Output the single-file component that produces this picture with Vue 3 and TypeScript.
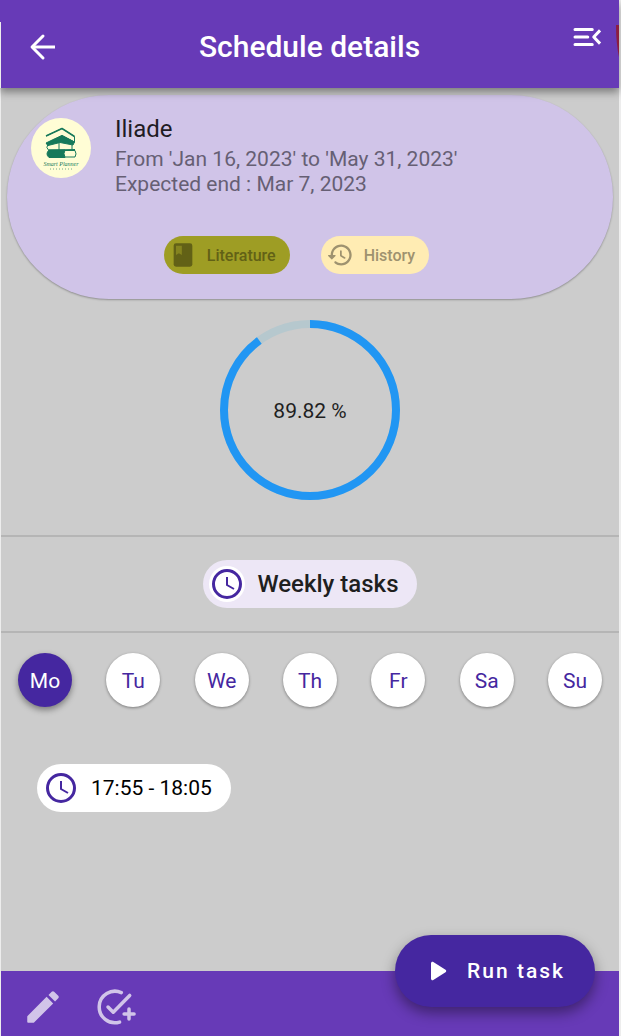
<script setup lang="ts">
import { computed, ref } from 'vue'

const days: string[] = ['Mo', 'Tu', 'We', 'Th', 'Fr', 'Sa', 'Su']
const activeDay = ref('Mo')
const progress = 89.82
const radius = 86
const circumference = 2 * Math.PI * radius
const dash = computed(() => `${(circumference * progress) / 100} ${circumference}`)
</script>

<template>
  <div class="page">
    <header class="app-bar">
      <button class="icon-btn back" type="button" aria-label="Back">
        <svg width="36" height="36" viewBox="0 0 24 24" fill="none" stroke="#fff" stroke-width="2">
          <path d="M20 12H5.500" />
          <path d="M12 4.700L4.700 12l7.300 7.300" stroke-linejoin="round" stroke-linecap="round" />
        </svg>
      </button>
      <h1>Schedule details</h1>
      <button class="icon-btn menu" type="button" aria-label="Open menu">
        <svg width="36" height="36" viewBox="0 0 24 24" fill="none" stroke="#fff" stroke-width="2" stroke-linecap="round">
          <path d="M4 7h11.500M4 12h8.500M4 17h11.500" />
          <path d="M20.700 7.600L16.500 12l4.200 4.400" stroke-linejoin="round" stroke-linecap="butt" />
        </svg>
      </button>
      <svg class="ribbon" width="3" height="32" viewBox="0 0 3 32" aria-hidden="true">
        <path d="M0 0H3V32Q0 18 0 0Z" fill="#8c1d3f" />
      </svg>
    </header>

    <main class="content">
      <section class="card">
        <div class="summary">
          <svg class="avatar" width="60" height="60" viewBox="0 0 60 60" role="img" aria-label="Smart Planner">
            <circle cx="30" cy="30" r="30" fill="#fffdd5" />
            <g stroke="#16795a" fill="none" stroke-width="1" stroke-linejoin="round">
              <path d="M15 18L31 10.500L43.500 18.500V24L31 17.500L15 26" />
              <path d="M15 18L31 10.500L43.500 18.500" stroke-width="1.500" />
              <path d="M15 25Q23 21 31 17.500L43.500 24L42 27L29 24.500L17 27.500Z" fill="#16795a" />
              <path d="M17 26Q14.500 30 17.500 32L44 31.500M28 24.500V32M41 27V31" />
              <path d="M18 32H34Q32 35.500 34 39.500H18Q14 36 18 32Z" fill="#16795a" />
              <path d="M33 32.500H44Q46 36 44 39H33" />
            </g>
            <text x="30" y="48" text-anchor="middle" class="logo-name">Smart Planner</text>
            <path d="M19 51H42" stroke="#16795a" stroke-width="1" stroke-dasharray="1 2" opacity=".6" />
          </svg>
          <div class="details">
            <h2>Iliade</h2>
            <p>From 'Jan 16, 2023' to 'May 31, 2023'</p>
            <p>Expected end : Mar 7, 2023</p>
          </div>
        </div>
        <div class="chips">
          <span class="chip literature">
            <svg width="28" height="28" viewBox="0 0 24 24" fill="currentColor" fill-rule="evenodd">
              <path d="M6 2H18a2 2 0 0 1 2 2V20a2 2 0 0 1-2 2H6a2 2 0 0 1-2-2V4a2 2 0 0 1 2-2Z" />
              <path d="M6 4V12L8.500 10.500L11 12V4Z" fill="#85841f" />
            </svg>
            Literature
          </span>
          <span class="chip history">
            <svg width="28" height="28" viewBox="0 0 24 24" fill="currentColor">
              <path d="M13.260 3C8.170 2.860 4 6.950 4 12H2.210c-.45 0-.67.54-.35.85l2.790 2.800c.2.2.51.2.71 0l2.790-2.800c.31-.31.09-.85-.36-.85H6c0-3.900 3.180-7.050 7.100-7 3.720.05 6.850 3.180 6.900 6.900.05 3.910-3.100 7.100-7 7.100-1.610 0-3.100-.55-4.280-1.480-.4-.31-.96-.28-1.320.08-.42.42-.39 1.130.08 1.490C9 20.290 10.910 21 13 21c5.050 0 9.140-4.170 9-9.260-.13-4.690-4.050-8.610-8.740-8.740zm-.51 5c-.41 0-.75.34-.75.75v3.680c0 .35.19.68.49.86l3.120 1.850c.36.21.82.09 1.030-.26.21-.36.09-.82-.26-1.030l-2.880-1.710v-3.400c0-.4-.34-.74-.75-.74z" />
            </svg>
            History
          </span>
        </div>
      </section>

      <section class="progress" role="progressbar" aria-label="Progress" :aria-valuenow="progress">
        <svg width="180" height="180" viewBox="0 0 180 180" fill="none" stroke-width="8">
          <circle cx="90" cy="90" :r="radius" stroke="#b6c8ce" />
          <circle cx="90" cy="90" :r="radius" stroke="#2196f3" :stroke-dasharray="dash" transform="rotate(-90 90 90)" />
        </svg>
        <span>{{ progress }} %</span>
      </section>

      <section class="weekly">
        <h2 class="weekly-pill">
          <svg class="clock-disc" width="36" height="36" viewBox="0 0 36 36" fill="none" stroke="#4527a0">
            <circle cx="18" cy="18" r="13.500" stroke-width="3" />
            <path d="M18 11V19L25 23" stroke-width="2" />
          </svg>
          Weekly tasks
        </h2>
      </section>

      <nav class="days" aria-label="Days">
        <button
          v-for="day in days"
          :key="day"
          type="button"
          class="day"
          :class="{ active: day === activeDay }"
          @click="activeDay = day"
        >{{ day }}</button>
      </nav>

      <div class="slots">
        <button class="slot" type="button">
          <svg width="36" height="36" viewBox="0 0 36 36" fill="none" stroke="#4527a0">
            <circle cx="18" cy="18" r="13.500" stroke-width="3" />
            <path d="M18 11V19L25 23" stroke-width="2" />
          </svg>
          17:55 - 18:05
        </button>
      </div>
    </main>

    <footer class="bottom-bar">
      <button class="icon-btn" type="button" aria-label="Edit">
        <svg width="42" height="42" viewBox="0 0 24 24" fill="#d1c4e9">
          <path d="M3 17.460v3.040c0 .28.22.5.5.5h3.040c.13 0 .26-.05.35-.15L17.810 9.940l-3.750-3.750L3.150 17.100c-.1.1-.15.22-.15.36zM20.710 7.040c.39-.39.39-1.020 0-1.410l-2.340-2.340c-.39-.39-1.020-.39-1.410 0l-1.830 1.830 3.750 3.750 1.830-1.830z" />
        </svg>
      </button>
      <button class="icon-btn" type="button" aria-label="Add task">
        <svg width="42" height="42" viewBox="0 0 24 24" fill="none" stroke="#d1c4e9" stroke-width="2" stroke-linecap="round" stroke-linejoin="round">
          <path d="M15.600 3.750A9 9 0 1 0 14.600 20.600" />
          <path d="M8 12L11 15L20.400 5.400" />
          <path d="M20 13.200V18.800M17.200 16H22.900" />
        </svg>
      </button>
      <button class="run" type="button">
        <svg width="36" height="36" viewBox="0 0 24 24" fill="#fff">
          <path d="M8 6.820v10.360c0 .79.87 1.270 1.540.84l8.140-5.180c.62-.39.62-1.290 0-1.690L9.540 5.980C8.870 5.550 8 6.030 8 6.820z" />
        </svg>
        Run task
      </button>
    </footer>
  </div>
</template>

<style>
body {
  margin: 0;
  background: #ededed;
}
</style>

<style scoped>
.page {
  display: flex;
  flex-direction: column;
  min-height: 100vh;
  margin-right: 2px;
  font-family: Roboto, 'Liberation Sans', sans-serif;
  font-size: 21px;
  color: #1f1f1f;
}
h1,
h2,
p {
  margin: 0;
}
svg {
  display: block;
  flex: none;
}
button {
  border: 0;
  font: inherit;
  cursor: pointer;
}
.icon-btn {
  padding: 0;
  background: none;
}
.app-bar {
  position: relative;
  z-index: 1;
  display: grid;
  grid-template-columns: 1fr auto 1fr;
  align-items: center;
  box-sizing: border-box;
  height: 88px;
  padding: 5px 14px 0;
  background: linear-gradient(#ededed, #ededed) 0 22px / 1px 100% no-repeat, #673ab7;
  box-shadow: 0 4px 8px rgba(0, 0, 0, 0.4);
  color: #fff;
}
.app-bar h1 {
  font-size: 30px;
  line-height: 36px;
  font-weight: 500;
}
.back {
  justify-self: start;
  margin-left: 11px;
}
.menu {
  justify-self: end;
  align-self: start;
  margin-top: 14px;
}
.ribbon {
  position: absolute;
  top: 25px;
  right: 0;
}
.content {
  flex: 1;
  margin-left: 1px;
  background: #ccc;
}
.card {
  box-sizing: border-box;
  height: 204px;
  margin: 7px 6px 0;
  padding: 20px 24px 0;
  border-radius: 102px;
  background: #d0c4e8;
  box-shadow: 0 1px 2px rgba(0, 0, 0, 0.3);
}
.summary {
  display: flex;
  gap: 24px;
  padding-top: 3px;
}
.logo-name {
  font: italic 6px 'Liberation Serif', serif;
  fill: #16795a;
}
.details {
  height: 121px;
  margin-top: -3px;
  color: #665f74;
  line-height: 25px;
}
.details h2 {
  margin-bottom: 4px;
  color: #1f1c24;
  font-size: 24px;
  line-height: 28px;
  font-weight: 400;
}
.chips {
  display: flex;
  justify-content: center;
  gap: 31px;
  padding-right: 27px;
}
.chip {
  display: flex;
  align-items: center;
  gap: 10px;
  height: 38px;
  padding: 0 14px 0 5px;
  border-radius: 19px;
  font-size: 16px;
  font-weight: 500;
}
.literature {
  background: #9e9d24;
  color: #626116;
}
.history {
  background: #ffecb3;
  color: #9e926f;
}
.progress {
  display: grid;
  place-items: center;
  padding: 21px 0 35px;
}
.progress > * {
  grid-area: 1 / 1;
}
.progress span {
  padding-top: 2px;
}
.weekly {
  display: flex;
  justify-content: center;
  padding: 23px 0;
  border-top: 2px solid #b5b5b5;
  border-bottom: 2px solid #b5b5b5;
}
.weekly-pill {
  display: flex;
  align-items: center;
  gap: 13px;
  height: 48px;
  padding: 0 19px 0 6px;
  border-radius: 24px;
  background: #ede7f6;
  font-size: 24px;
  font-weight: 500;
}
.clock-disc {
  border-radius: 50%;
  background: #fff;
}
.days {
  display: flex;
  justify-content: space-between;
  padding: 20px 17px 0;
}
.day {
  width: 54px;
  height: 54px;
  padding: 2px 0 0;
  border-radius: 50%;
  background: #fff;
  box-shadow: 0 1px 3px rgba(0, 0, 0, 0.4);
  color: #4527a0;
}
.day.active {
  background: #4527a0;
  box-shadow: 0 3px 6px rgba(0, 0, 0, 0.4);
  color: #fff;
}
.slots {
  padding: 57px 36px;
}
.slot {
  display: flex;
  align-items: center;
  gap: 12px;
  height: 48px;
  padding: 0 19px 0 6px;
  border-radius: 24px;
  background: #fff;
  color: #000;
}
.bottom-bar {
  position: relative;
  display: flex;
  align-items: flex-start;
  gap: 30px;
  box-sizing: border-box;
  height: 65px;
  margin-left: 1px;
  padding: 15px 21px 0;
  background: #673ab7;
}
.run {
  position: absolute;
  top: -36px;
  right: 24px;
  display: flex;
  align-items: center;
  gap: 12px;
  height: 72px;
  padding: 0 30px 0 24px;
  border-radius: 36px;
  background: #4527a0;
  box-shadow: 0 6px 14px rgba(0, 0, 0, 0.4);
  color: #fff;
  font-weight: 500;
  letter-spacing: 2px;
}
</style>
